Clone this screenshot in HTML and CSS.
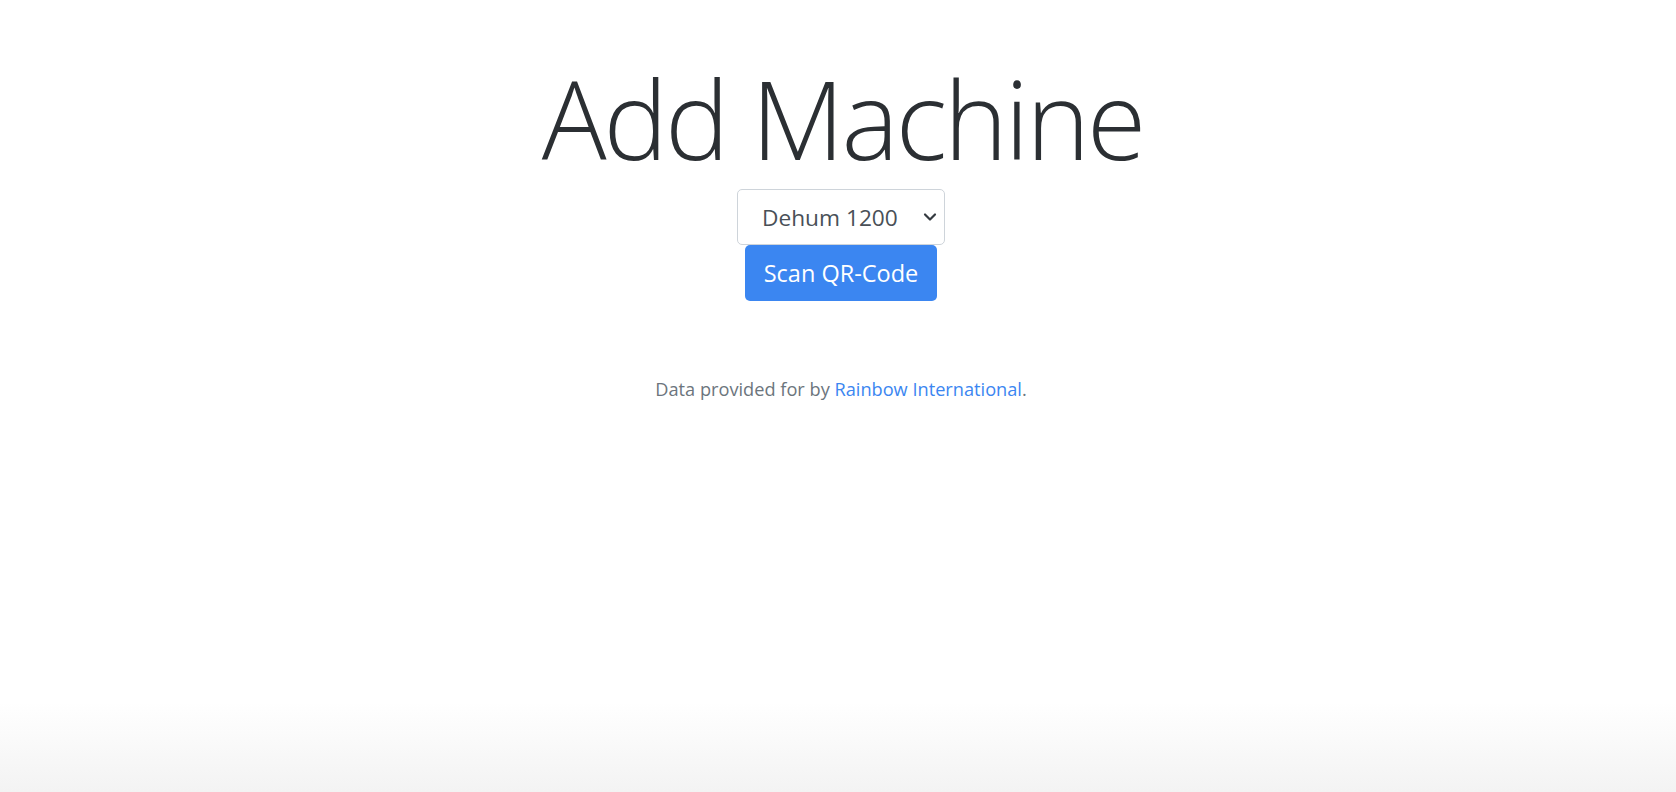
FILE: index.html
```html
<!DOCTYPE html>
<html lang="en">
<head>
<meta charset="utf-8">
<title>Add Machine</title>
<link rel="stylesheet" href="styles.css">
</head>
<body>
<main class="page">
  <h1 class="title">Add Machine</h1>
  <div class="select-wrap">
    <select class="machine-select">
      <option>Dehum 1200</option>
    </select>
    <svg class="chevron" width="14" height="10" viewBox="0 0 14 10" aria-hidden="true"><path d="M2 2.5 L7 7.5 L12 2.5" fill="none" stroke="#343a40" stroke-width="2.2" stroke-linecap="round" stroke-linejoin="round"/></svg>
  </div>
  <button class="scan-btn" type="button">Scan QR-Code</button>
  <p class="credit">Data provided for by <a href="#" class="credit-link">Rainbow International</a>.</p>
</main>
<div class="fade"></div>
</body>
</html>
```

FILE: styles.css
```css
html, body {
  margin: 0;
  padding: 0;
  height: 100%;
}
body {
  background: #ffffff;
  font-family: "Open Sans", "Noto Sans", sans-serif;
  color: #212529;
  overflow: hidden;
  position: relative;
}
.page {
  display: flex;
  flex-direction: column;
  align-items: center;
  padding-top: 49px;
  padding-left: 6px;
}
.title {
  margin: 0;
  font-weight: 300;
  font-size: 108px;
  line-height: 140px;
  color: #2b2f33;
  letter-spacing: -3px;
  text-indent: 3px;
}
.select-wrap {
  position: relative;
}
.machine-select {
  appearance: none;
  -webkit-appearance: none;
  width: 208px;
  height: 56px;
  box-sizing: border-box;
  border: 1px solid #ced4da;
  border-radius: 5px;
  background: #fff;
  padding: 0 0 0 24px;
  font-family: "Open Sans", "Noto Sans", sans-serif;
  font-size: 22.7px;
  color: #495057;
}
.chevron {
  position: absolute;
  right: 8px;
  top: 23px;
}
.scan-btn {
  margin-top: 0;
  width: 192px;
  height: 56px;
  border: none;
  border-radius: 5px;
  background: #3b86f1;
  color: #fff;
  font-family: "Open Sans", "Noto Sans", sans-serif;
  font-size: 23.5px;
  padding: 0;
  cursor: pointer;
}
.credit {
  margin: 76px 0 0;
  font-size: 18.2px;
  color: #6c757d;
}
.credit-link {
  color: #3b86f1;
  text-decoration: none;
}
.fade {
  position: absolute;
  left: 0;
  right: 0;
  bottom: 0;
  height: 90px;
  background: linear-gradient(to bottom, rgba(243,243,243,0), #f3f3f3);
}
```
